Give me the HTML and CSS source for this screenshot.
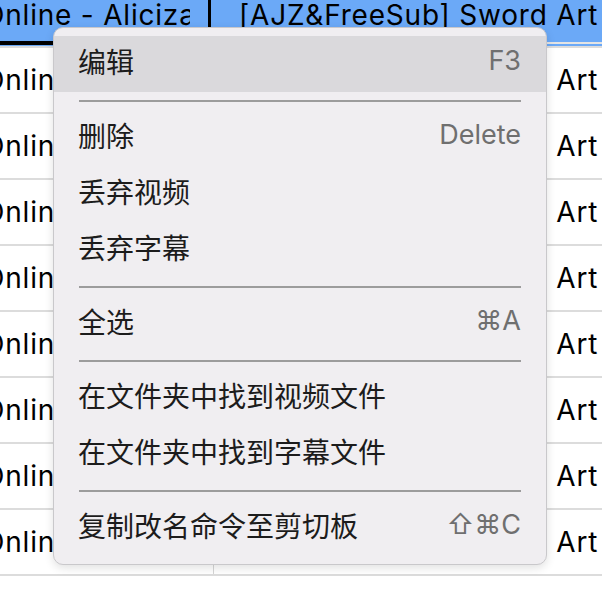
FILE: index.html
```html
<!DOCTYPE html>
<html lang="zh-CN">
<head>
<meta charset="utf-8">
<title>Context menu</title>
<link rel="stylesheet" href="styles.css">
</head>
<body>
<div class="table">
  <div class="row head">
    <div class="cell c1"><div class="clip"><span class="txt">Online - Alicization - 01.mkv</span></div></div>
    <div class="cell c2"><span class="txt">[AJZ&amp;FreeSub] Sword Art Online - Alicization - 01 [1080P].ass</span></div>
  </div>
  <div class="row"><div class="cell c1"><div class="clip"><span class="txt">Online - Alicization - 02.mkv</span></div></div><div class="cell c2"><span class="txt">[AJZ&amp;FreeSub] Sword Art Online - Alicization - 02 [1080P].ass</span></div></div>
  <div class="row"><div class="cell c1"><div class="clip"><span class="txt">Online - Alicization - 03.mkv</span></div></div><div class="cell c2"><span class="txt">[AJZ&amp;FreeSub] Sword Art Online - Alicization - 03 [1080P].ass</span></div></div>
  <div class="row"><div class="cell c1"><div class="clip"><span class="txt">Online - Alicization - 04.mkv</span></div></div><div class="cell c2"><span class="txt">[AJZ&amp;FreeSub] Sword Art Online - Alicization - 04 [1080P].ass</span></div></div>
  <div class="row"><div class="cell c1"><div class="clip"><span class="txt">Online - Alicization - 05.mkv</span></div></div><div class="cell c2"><span class="txt">[AJZ&amp;FreeSub] Sword Art Online - Alicization - 05 [1080P].ass</span></div></div>
  <div class="row"><div class="cell c1"><div class="clip"><span class="txt">Online - Alicization - 06.mkv</span></div></div><div class="cell c2"><span class="txt">[AJZ&amp;FreeSub] Sword Art Online - Alicization - 06 [1080P].ass</span></div></div>
  <div class="row"><div class="cell c1"><div class="clip"><span class="txt">Online - Alicization - 07.mkv</span></div></div><div class="cell c2"><span class="txt">[AJZ&amp;FreeSub] Sword Art Online - Alicization - 07 [1080P].ass</span></div></div>
  <div class="row"><div class="cell c1"><div class="clip"><span class="txt">Online - Alicization - 08.mkv</span></div></div><div class="cell c2"><span class="txt">[AJZ&amp;FreeSub] Sword Art Online - Alicization - 08 [1080P].ass</span></div></div>
  <div class="row"><div class="cell c1"><div class="clip"><span class="txt">Online - Alicization - 09.mkv</span></div></div><div class="cell c2"><span class="txt">[AJZ&amp;FreeSub] Sword Art Online - Alicization - 09 [1080P].ass</span></div></div>
  <div class="row tail"></div>
</div>

<div class="menu">
  <div class="item active"><span class="label">编辑</span><span class="key">F3</span></div>
  <div class="sep"></div>
  <div class="item"><span class="label">删除</span><span class="key">Delete</span></div>
  <div class="item"><span class="label">丢弃视频</span></div>
  <div class="item"><span class="label">丢弃字幕</span></div>
  <div class="sep"></div>
  <div class="item"><span class="label">全选</span><span class="key">⌘A</span></div>
  <div class="sep"></div>
  <div class="item"><span class="label">在文件夹中找到视频文件</span></div>
  <div class="item"><span class="label">在文件夹中找到字幕文件</span></div>
  <div class="sep"></div>
  <div class="item"><span class="label">复制改名命令至剪切板</span><span class="key">⇧⌘C</span></div>
</div>
</body>
</html>
```

FILE: styles.css
```css
html, body {
  margin: 0;
  padding: 0;
}
body {
  width: 602px;
  height: 598px;
  overflow: hidden;
  background: #ffffff;
  position: relative;
  font-family: Inter, "Liberation Sans", "Noto Sans CJK SC", sans-serif;
  color: #000;
}

.table {
  display: flex;
  flex-direction: column;
  height: 598px;
  overflow: hidden;
}

.row {
  display: flex;
  height: 66px;
  flex: none;
  box-sizing: border-box;
  border-top: 2px solid #dcdcdc;
}
.row.tail {
  flex: 1;
  height: auto;
}

.cell {
  display: flex;
  align-items: center;
  overflow: hidden;
  white-space: nowrap;
  font-size: 28px;
  line-height: 28px;
  letter-spacing: 0.8px;
  box-sizing: border-box;
}

.c1 {
  width: 214px;
  flex: none;
  border-right: 1px solid #d6d6d6;
  padding-right: 18px;
}
.clip {
  flex: 1;
  overflow: hidden;
  white-space: nowrap;
}
.c1 .txt {
  margin-left: -17px;
}
.c2 {
  flex: 1;
  padding-left: 25px;
}

.row.head {
  height: 46px;
  border-top: none;
  background: #6ba9f7;
}
.row.head .cell {
  align-items: flex-start;
  padding-top: 1px;
}
.row.head .c1 {
  width: 211px;
  border-right: 3px solid #000;
  border-bottom: 4px solid #000;
  height: 45px;
  padding-right: 18px;
}
.row.head .c2 {
  padding-left: 28px;
  height: 44px;
  border-bottom: 2px solid #e4e4e4;
}

/* context menu overlay */
.menu {
  position: absolute;
  left: 53px;
  top: 27px;
  width: 494px;
  box-sizing: border-box;
  padding: 8px 0;
  background: #f0eef1;
  border: 1px solid #c9c8cb;
  border-radius: 10px;
  box-shadow: 0 3px 10px rgba(0, 0, 0, 0.12);
  font-family: "Noto Sans CJK SC", sans-serif;
  color: #1c1c1c;
}

.item {
  display: flex;
  align-items: center;
  justify-content: space-between;
  height: 56px;
  box-sizing: border-box;
  padding: 0 25px 6px 24px;
  font-size: 28px;
  line-height: 30px;
  white-space: nowrap;
}
.item.active {
  background: #dad9dc;
}

.key {
  font-family: Inter, "DejaVu Sans", sans-serif;
  font-size: 27px;
  color: #6f6f6f;
}

.sep {
  height: 2px;
  margin: 8px 25px;
  background: #9c9c9c;
}
```
